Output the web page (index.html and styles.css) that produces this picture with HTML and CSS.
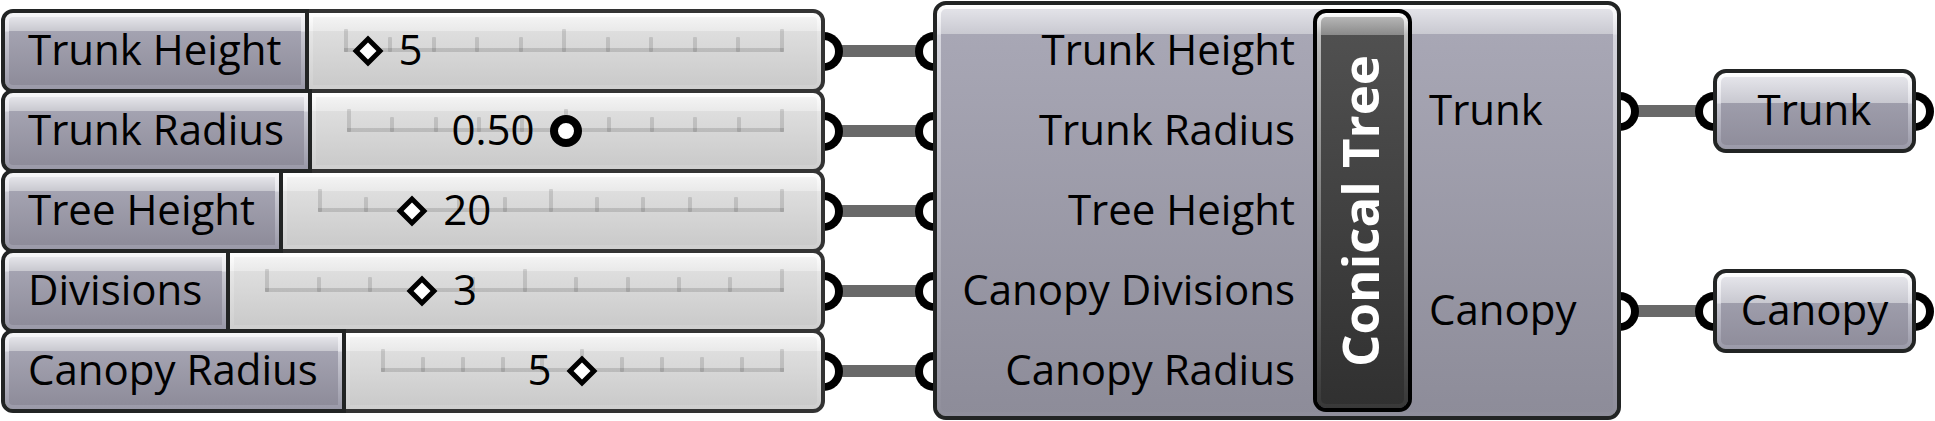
FILE: index.html
```html
<!DOCTYPE html>
<html lang="en">
<head>
<meta charset="utf-8">
<title>Conical Tree</title>
<link rel="stylesheet" href="styles.css">
</head>
<body>
<main class="graph">
  <section class="sliders">
    <div class="slider">
      <label class="slider-name" for="trunk-height">Trunk Height</label>
      <div class="slider-body"><div class="track" style="--pos: 5%">
        <div class="ticks"><i></i><i></i><i></i><i></i><i></i><i></i><i></i><i></i><i></i><i></i><i></i></div>
        <input id="trunk-height" type="range" min="0" max="100" value="5">
        <output class="value after" for="trunk-height">5</output>
      </div></div>
    </div>
    <div class="slider">
      <label class="slider-name" for="trunk-radius">Trunk Radius</label>
      <div class="slider-body"><div class="track" style="--pos: 50%">
        <div class="ticks"><i></i><i></i><i></i><i></i><i></i><i></i><i></i><i></i><i></i><i></i><i></i></div>
        <input class="round" id="trunk-radius" type="range" min="0" max="1" step="0.01" value="0.5">
        <output class="value before" for="trunk-radius">0.50</output>
      </div></div>
    </div>
    <div class="slider">
      <label class="slider-name" for="tree-height">Tree Height</label>
      <div class="slider-body"><div class="track" style="--pos: 20%">
        <div class="ticks"><i></i><i></i><i></i><i></i><i></i><i></i><i></i><i></i><i></i><i></i><i></i></div>
        <input id="tree-height" type="range" min="0" max="100" value="20">
        <output class="value after" for="tree-height">20</output>
      </div></div>
    </div>
    <div class="slider">
      <label class="slider-name" for="divisions">Divisions</label>
      <div class="slider-body"><div class="track" style="--pos: 30%">
        <div class="ticks"><i></i><i></i><i></i><i></i><i></i><i></i><i></i><i></i><i></i><i></i><i></i></div>
        <input id="divisions" type="range" min="0" max="10" value="3">
        <output class="value after" for="divisions">3</output>
      </div></div>
    </div>
    <div class="slider">
      <label class="slider-name" for="canopy-radius">Canopy Radius</label>
      <div class="slider-body"><div class="track" style="--pos: 50%">
        <div class="ticks"><i></i><i></i><i></i><i></i><i></i><i></i><i></i><i></i><i></i><i></i><i></i></div>
        <input id="canopy-radius" type="range" min="0" max="10" value="5">
        <output class="value before" for="canopy-radius">5</output>
      </div></div>
    </div>
  </section>

  <div class="wires wires-in">
    <div class="wire"><span class="port out"></span><span class="line"></span><span class="port in"></span></div>
    <div class="wire"><span class="port out"></span><span class="line"></span><span class="port in"></span></div>
    <div class="wire"><span class="port out"></span><span class="line"></span><span class="port in"></span></div>
    <div class="wire"><span class="port out"></span><span class="line"></span><span class="port in"></span></div>
    <div class="wire"><span class="port out"></span><span class="line"></span><span class="port in"></span></div>
  </div>

  <section class="component">
    <ul class="inputs">
      <li>Trunk Height</li>
      <li>Trunk Radius</li>
      <li>Tree Height</li>
      <li>Canopy Divisions</li>
      <li>Canopy Radius</li>
    </ul>
    <h1 class="nameplate"><span>Conical Tree</span></h1>
    <ul class="outputs">
      <li>Trunk</li>
      <li>Canopy</li>
    </ul>
  </section>

  <div class="wires wires-out">
    <div class="wire"><span class="port out"></span><span class="line"></span><span class="port in"></span></div>
    <div class="wire"><span class="port out"></span><span class="line"></span><span class="port in"></span></div>
  </div>

  <section class="params">
    <div class="param-row"><div class="param">Trunk</div><span class="port out"></span></div>
    <div class="param-row"><div class="param">Canopy</div><span class="port out"></span></div>
  </section>
</main>
</body>
</html>
```
FILE: styles.css
```css
* { box-sizing: border-box; }

body {
  margin: 0;
  background: #fff;
  color: #000;
  font-family: "Open Sans", "Noto Sans", sans-serif;
  font-size: 42px;
  line-height: 60px;
  white-space: nowrap;
}

ul { list-style: none; margin: 0; padding: 0; }

.graph {
  display: grid;
  grid-template-columns: minmax(0, 824fr) minmax(0, 108fr) minmax(0, 688fr) minmax(0, 92fr) minmax(0, 221fr);
  padding: 1px;
}

/* Number sliders */
.sliders {
  position: relative;
  z-index: 1;
  padding-top: 8px;
}

.slider {
  display: flex;
  height: 84px;
}

.slider + .slider { margin-top: -4px; }

.slider-name,
.slider-body {
  border: 4px solid #222424;
}

.slider-name {
  position: relative;
  isolation: isolate;
  border-radius: 12px 0 0 12px;
  padding: 6px 24px 10px 23px;
  background: linear-gradient(#f6f6f8, #e4e4ea 18px, #cbcbd4 19px, #9a99a8) padding-box;
}

.slider-name::before {
  content: "";
  position: absolute;
  z-index: -1;
  inset: 4px;
  border-radius: 4px 0 0 4px;
  background: linear-gradient(#e4e4e9, #c8c8cf 14px, #a4a3b1 14px, #8e8c9a);
}

.slider-body {
  flex: 1;
  margin-left: -4px;
  padding: 4px;
  border-color: #333;
  border-radius: 0 12px 12px 0;
  background:
    linear-gradient(#f6f6f6, #e9e9e9 18px, #dedede 18px, #c9c9c9) content-box,
    linear-gradient(#fff, #f0f0f0 18px, #e6e6e6 18px, #cfcfcf) padding-box;
  background-origin: padding-box;
}

.track {
  position: relative;
  margin: 12px 33px 0 31px;
}

.ticks {
  display: flex;
  justify-content: space-between;
  align-items: flex-end;
  height: 23px;
  background: linear-gradient(rgba(0, 0, 0, .13), rgba(0, 0, 0, .13)) bottom / 100% 4px no-repeat;
}

.ticks i {
  width: 4px;
  height: 15px;
  border-radius: 1px;
  background: rgba(0, 0, 0, .12);
}

.ticks i:nth-child(5n + 1) { height: 23px; }

.track input {
  -webkit-appearance: none;
  appearance: none;
  position: absolute;
  left: -9px;
  top: 6px;
  width: calc(100% + 18px);
  height: 32px;
  margin: 0;
  background: none;
}

.track input.round {
  left: -14px;
  width: calc(100% + 28px);
}

.track input::-webkit-slider-thumb {
  -webkit-appearance: none;
  appearance: none;
  width: 22px;
  height: 22px;
  border: 5px solid #000;
  background: #fff;
  transform: rotate(45deg);
}

.track input.round::-webkit-slider-thumb {
  width: 32px;
  height: 32px;
  border-width: 8px;
  border-radius: 50%;
}

.value {
  position: absolute;
  top: -10px;
}

.value.after { left: calc(var(--pos) + 32px); }
.value.before { right: calc(100% - var(--pos) + 31px); }

/* Wires and their ports */
.wires {
  display: grid;
  isolation: isolate;
  padding-top: 10px;
}

.wires-in { grid-template-rows: repeat(5, 80px); }
.wires-out { grid-template-rows: repeat(2, 200px); }

.wire {
  display: flex;
  align-items: center;
}

.line {
  flex: 1;
  height: 12px;
  margin: 0 -4px;
  background: #696969;
}

.port {
  z-index: 1;
  width: 20px;
  height: 39px;
  border: 8px solid #000;
  background: #fff;
}

.port.out {
  border-left: 0;
  border-radius: 0 20px 20px 0;
  margin-left: -2px;
}

.port.in {
  border-right: 0;
  border-radius: 20px 0 0 20px;
  margin-right: -2px;
}

/* Component */
.component {
  position: relative;
  z-index: 1;
  display: grid;
  grid-template-columns: minmax(0, 372fr) minmax(0, 99fr) minmax(0, 201fr);
  padding: 4px;
  border: 4px solid #222424;
  border-radius: 13px;
  background:
    linear-gradient(#e7e7ec, #c9c9d1 29px, #a8a7b5 29px, #8d8c99) content-box,
    linear-gradient(#fff, #e2e2e8 29px, #d6d6de 30px, #8f8e9b) padding-box;
  background-origin: padding-box;
}

.inputs,
.outputs {
  display: grid;
  padding: 2px 0 1px;
}

.inputs {
  grid-template-rows: repeat(5, 80px);
  padding-right: 18px;
  text-align: right;
}

.outputs {
  grid-template-rows: repeat(2, 200px);
  padding-left: 17px;
}

.inputs li,
.outputs li {
  align-self: center;
  padding-bottom: 4px;
}

.nameplate {
  display: flex;
  align-items: center;
  justify-content: center;
  margin: 0;
  padding: 4px;
  border: 4px solid #000;
  border-radius: 13px;
  color: #fff;
  font-size: 51px;
  line-height: 60px;
  background:
    linear-gradient(#c0c0c0, #8a8a8a 22px, #505050 22px, #303030) content-box,
    linear-gradient(#fff, #bdbdbd 22px, #b4b4b4 40px, #383838) padding-box;
  background-origin: padding-box;
}

.nameplate span {
  writing-mode: vertical-rl;
  transform: rotate(180deg);
  margin-right: 8px;
}

/* Output parameters */
.params {
  display: grid;
  grid-template-rows: repeat(2, 200px);
  padding-top: 10px;
}

.param-row {
  display: flex;
  align-items: center;
}

.param {
  flex: 1;
  position: relative;
  z-index: 2;
  height: 84px;
  padding: 4px;
  border: 4px solid #222424;
  border-radius: 13px;
  line-height: 64px;
  text-align: center;
  background:
    linear-gradient(#e9e9ee, #c8c8d0 30px, #9e9dab 30px, #8e8c9a) content-box,
    linear-gradient(#fff, #dedee5 30px, #c4c4ce 31px, #9a99a8) padding-box;
  background-origin: padding-box;
}
```
